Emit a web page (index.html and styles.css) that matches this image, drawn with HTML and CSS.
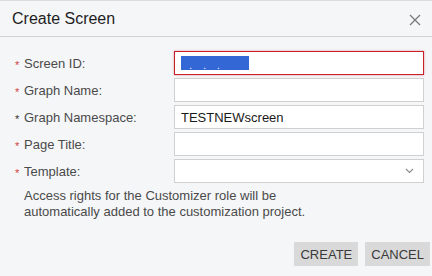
FILE: index.html
```html
<!DOCTYPE html>
<html lang="en">
<head>
    <meta charset="UTF-8">
    <title>Create Screen</title>
    <link rel="stylesheet" href="styles.css">
</head>
<body>
<div class="dialog">
    <div class="dialog-header">
        <span class="dialog-title">Create Screen</span>
        <button type="button" class="close-btn" aria-label="Close">
            <svg width="12" height="12" viewBox="0 0 12 12"><path d="M1 1 L11 11 M11 1 L1 11" stroke="#7a7a7a" stroke-width="1.3" fill="none"/></svg>
        </button>
    </div>

    <div class="dialog-body">
        <div class="form-row">
            <label><span class="req">*</span>Screen ID:</label>
            <div class="field field-error"><span class="selected-text">&nbsp;&nbsp;&nbsp;.&nbsp;&nbsp;&nbsp;&nbsp;.&nbsp;&nbsp;&nbsp;&nbsp;.&nbsp;&nbsp;&nbsp;</span></div>
        </div>
        <div class="form-row">
            <label><span class="req">*</span>Graph Name:</label>
            <div class="field"></div>
        </div>
        <div class="form-row">
            <label><span class="req dark">*</span>Graph Namespace:</label>
            <div class="field">TESTNEWscreen</div>
        </div>
        <div class="form-row">
            <label><span class="req">*</span>Page Title:</label>
            <div class="field"></div>
        </div>
        <div class="form-row">
            <label><span class="req">*</span>Template:</label>
            <div class="field field-select">
                <svg width="9" height="6" viewBox="0 0 9 6"><path d="M1 1 L4.5 4.5 L8 1" stroke="#8a8a8a" stroke-width="1.1" fill="none"/></svg>
            </div>
        </div>
        <p class="note">Access rights for the Customizer role will be<br>automatically added to the customization project.</p>
    </div>

    <div class="dialog-footer">
        <button type="button" class="btn">CREATE</button>
        <button type="button" class="btn">CANCEL</button>
    </div>
</div>
</body>
</html>
```

FILE: styles.css
```css
* {
    box-sizing: border-box;
    margin: 0;
    padding: 0;
}

body {
    font-family: "Liberation Sans", Arial, sans-serif;
    background-color: #f5f6f8;
    width: 432px;
    height: 276px;
    overflow: hidden;
}

.dialog {
    border-top: 1px solid #dcdcdc;
    height: 276px;
}

.dialog-header {
    display: flex;
    justify-content: space-between;
    align-items: center;
    height: 36px;
    padding: 0 10px 0 12px;
    border-bottom: 1px solid #d2d2d2;
}

.dialog-title {
    font-size: 16px;
    color: #1e1e1e;
    padding-top: 1px;
}

.close-btn {
    background: none;
    border: none;
    width: 14px;
    height: 14px;
    display: flex;
    align-items: center;
    justify-content: center;
    margin-top: 2px;
}

.dialog-body {
    padding: 14px 8px 0 15px;
}

.form-row {
    display: flex;
    align-items: center;
    height: 24px;
    margin-bottom: 3px;
}

.form-row label {
    width: 159px;
    font-size: 13px;
    color: #4a4a4a;
    display: flex;
    align-items: center;
}

.req {
    color: #d04040;
    width: 9px;
    font-size: 11px;
    padding-top: 3px;
}

.req.dark {
    color: #333;
}

.field {
    width: 250px;
    height: 24px;
    background: #fff;
    border: 1px solid #d0d0d0;
    font-size: 13px;
    color: #1a1a1a;
    padding: 0 6px;
    display: flex;
    align-items: center;
}

.field-error {
    border: 1px solid #c8202a;
    box-shadow: 0 0 2px rgba(210, 40, 50, 0.5);
}

.selected-text {
    background: #3367d6;
    color: #fff;
    height: 14px;
    line-height: 14px;
    font-size: 10px;
    width: 68px;
    overflow: hidden;
    white-space: pre;
    padding-top: 3px;
}

.field-select {
    justify-content: flex-end;
    padding-right: 9px;
}

.note {
    font-size: 13px;
    color: #4a4a4a;
    line-height: 16px;
    margin: 5px 0 0 9px;
}

.dialog-footer {
    display: flex;
    justify-content: flex-end;
    gap: 7px;
    padding: 22px 2px 0 0;
}

.btn {
    background: #d9d9d9;
    border: none;
    font-family: "Liberation Sans", Arial, sans-serif;
    font-size: 13px;
    color: #3a3a3a;
    height: 24px;
    padding: 0 6px;
}
```
